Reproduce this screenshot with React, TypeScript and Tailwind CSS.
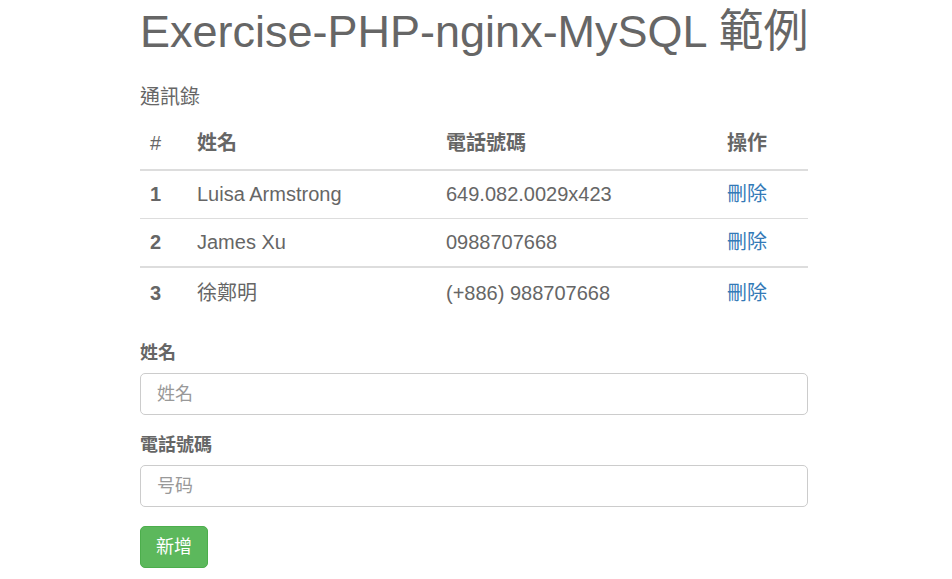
const contacts = [
  { id: 1, name: "Luisa Armstrong", phone: "649.082.0029x423" },
  { id: 2, name: "James Xu", phone: "0988707668" },
  { id: 3, name: "徐鄭明", phone: "(+886) 988707668" },
];

const font = {
  fontFamily: '"Liberation Sans", "Noto Sans CJK TC", sans-serif',
};

export default function App() {
  return (
    <div className="min-h-[579px] bg-white text-[#666]" style={font}>
      <div className="ml-[140px] w-[668px] pt-[7px]">
        <h1 className="text-[45px] leading-[50px] font-normal whitespace-nowrap">
          Exercise-PHP-nginx-MySQL 範例
        </h1>

        {/* 通訊錄 */}
        <p className="mt-[26px] text-[20px] leading-[28px]">通訊錄</p>

        <table className="mt-[11px] w-full table-fixed border-collapse text-[20px]">
          <colgroup>
            <col className="w-[47px]" />
            <col className="w-[249px]" />
            <col className="w-[281px]" />
            <col className="w-[91px]" />
          </colgroup>
          <thead>
            <tr className="h-[48px] border-b-2 border-[#ddd] text-left font-bold">
              <th className="pb-[6px] pl-[10px] font-normal">#</th>
              <th className="pb-[6px] pl-[10px]">姓名</th>
              <th className="pb-[6px] pl-[10px]">電話號碼</th>
              <th className="pb-[6px] pl-[10px]">操作</th>
            </tr>
          </thead>
          <tbody>
            {contacts.map((c, i) => (
              <tr
                key={c.id}
                className={
                  i === 0
                    ? "h-[48px]"
                    : i === 1
                      ? "h-[49px] border-t border-[#ddd]"
                      : "h-[50px] border-t-2 border-[#ddd]"
                }
              >
                <th className="pl-[10px] text-left font-bold">{c.id}</th>
                <td className="pl-[10px]">{c.name}</td>
                <td className="pl-[10px]">{c.phone}</td>
                <td className="pl-[10px]">
                  <a href="#" className="text-[#337ab7]">
                    刪除
                  </a>
                </td>
              </tr>
            ))}
          </tbody>
        </table>

        {/* 新增表單 */}
        <form className="mt-[23px] text-[18px]">
          <label className="block leading-[26px] font-bold">姓名</label>
          <input
            placeholder="姓名"
            className="mt-[7px] block h-[42px] w-full rounded-[5px] border border-[#ccc] px-[16px] placeholder:text-[#999]"
          />
          <label className="mt-[17px] block leading-[26px] font-bold">電話號碼</label>
          <input
            placeholder="号码"
            className="mt-[7px] block h-[42px] w-full rounded-[5px] border border-[#ccc] px-[16px] placeholder:text-[#999]"
          />
          <button
            type="button"
            className="mt-[19px] h-[42px] rounded-[5px] border border-[#4cae4c] bg-[#5cb85c] px-[15px] text-white"
          >
            新增
          </button>
        </form>
      </div>
    </div>
  );
}
